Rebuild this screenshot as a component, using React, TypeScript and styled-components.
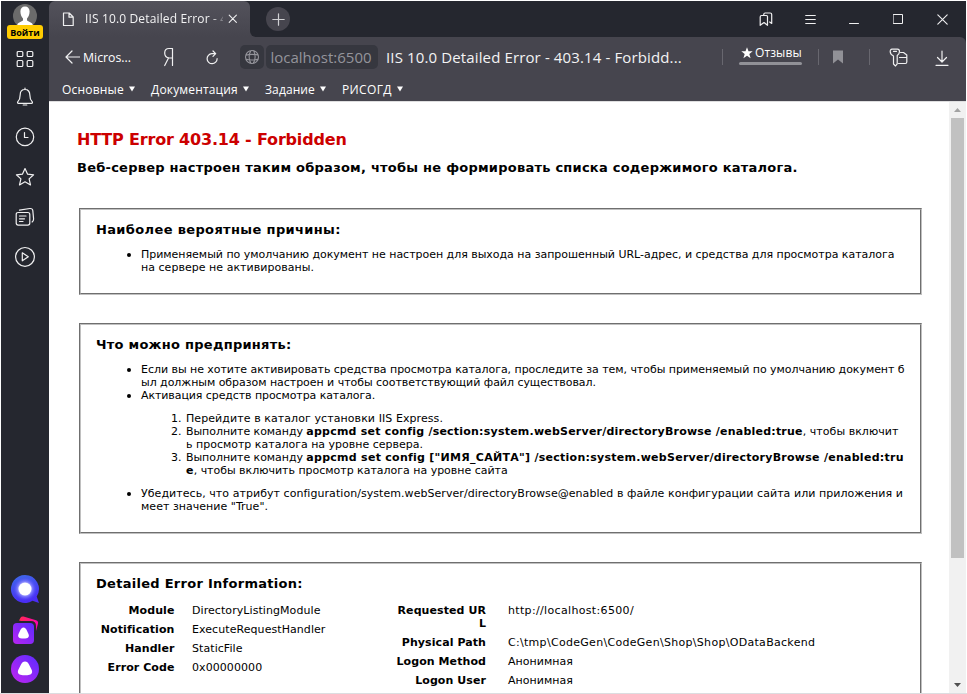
import React from 'react';
import styled, { createGlobalStyle } from 'styled-components';

const Global = createGlobalStyle`
  * { box-sizing: border-box; }
  body { margin: 0; background: #fff; overflow: hidden; }
  svg { display: block; flex: none; }
`;

const UI = "'Open Sans', 'Noto Sans', sans-serif";
const PAGE = "Verdana, 'DejaVu Sans', sans-serif";

const Window = styled.div`
  width: 967px;
  height: 694px;
  padding: 1px 1px 0 1px;
  border-bottom: 1px solid #dcdde0;
  display: flex;
  background: #fff;
  overflow: hidden;
`;

const Sidebar = styled.nav`
  width: 48px;
  flex: none;
  background: #25272f;
  display: flex;
  flex-direction: column;
  align-items: center;
`;

const Profile = styled.div`
  height: 39px;
  padding-top: 3px;
  display: flex;
  flex-direction: column;
  align-items: center;
`;

const SignIn = styled.div`
  width: 36px;
  height: 14px;
  margin-top: -3px;
  border-radius: 3px;
  background: #ffcc00;
  color: #000;
  font: bold 9px/15px ${UI};
  text-align: center;
  z-index: 1;
`;

const SideItem = styled.div<{ $h?: number }>`
  height: ${p => p.$h ?? 40}px;
  width: 48px;
  display: flex;
  align-items: center;
  justify-content: center;
`;

const Spacer = styled.div`flex: 1;`;

const Main = styled.div`
  flex: 1;
  min-width: 0;
  display: flex;
  flex-direction: column;
  background: #25272f;
`;

const TabStrip = styled.header`
  height: 36px;
  flex: none;
  display: flex;
  align-items: center;
  background: #25272f;
  color: #fff;
`;

const TabSlot = styled.div`
  width: 212px;
  height: 36px;
  flex: none;
  display: flex;
  background: #46454e;
`;

const TabBack = styled.div`
  width: 201px;
  height: 36px;
  flex: none;
  background: #25272f;
`;

const Tab = styled.div`
  height: 36px;
  display: flex;
  align-items: center;
  padding-left: 13px;
  border-radius: 6px 6px 0 0;
  background: linear-gradient(#53525b, #46454e);
`;

const TabEdge = styled.div`
  flex: 1;
  height: 36px;
  border-bottom-left-radius: 6px;
  background: #25272f;
`;

const TabTitle = styled.div`
  width: 138px;
  margin-left: 10px;
  overflow: hidden;
  white-space: nowrap;
  font: 12px/18px ${UI};
  letter-spacing: 0.14px;
  color: #f2f2f3;
  mask-image: linear-gradient(to right, #000 126px, transparent 142px);
`;

const TabClose = styled.div`margin-left: 5px;`;

const NewTab = styled.div`
  width: 24px;
  height: 24px;
  margin-left: 5px;
  border-radius: 50%;
  background: #46454e;
  display: grid;
  place-items: center;
`;

const WindowButtons = styled.div`
  margin-left: auto;
  display: grid;
  grid-template-columns: repeat(5, 44px);
  justify-items: center;
  align-items: center;
  height: 36px;
  padding-right: 2px;
`;

const Chrome = styled.div`
  height: 64px;
  flex: none;
  background: #46454e;
  border-radius: 0 6px 0 0;
  color: #fff;
`;

const Toolbar = styled.div`
  height: 40px;
  display: flex;
  align-items: center;
`;

const Back = styled.div`
  width: 92px;
  margin-left: 16px;
  display: flex;
  align-items: center;
  gap: 3px;
  font: 12.3px/20px ${UI};
`;

const BackLabel = styled.span`padding-top: 2px;`;

const Ya = styled.div`
  width: 44px;
  margin-left: -2px;
`;

const Chip = styled.div<{ $w: number }>`
  width: ${p => p.$w}px;
  height: 24px;
  border-radius: 5px;
  background: #36373f;
  color: #94949b;
  display: flex;
  align-items: center;
  justify-content: center;
  font: 15px/24px ${UI};
  margin-right: 2px;
`;

const Host = styled.span`padding-right: 2px;`;

const PageTitle = styled.div`
  margin-left: 6px;
  width: 336px;
  white-space: nowrap;
  font: 15px/24px ${UI};
  letter-spacing: 0.13px;
  color: #f3f3f4;
`;

const Divider = styled.div`
  width: 1px;
  height: 16px;
  background: #68676f;
`;

const Reviews = styled.div`
  width: 63px;
  height: 26px;
  margin: 0 16px;
  display: flex;
  flex-direction: column;
  font: 12px/17px ${UI};
`;

const ReviewsLabel = styled.div`
  display: flex;
  align-items: center;
  gap: 2px;
  padding-left: 2px;
  height: 17px;
  letter-spacing: 0.1px;
`;

const Meter = styled.div`
  height: 3px;
  margin-top: 1px;
  border-radius: 2px;
  background: #919197;
`;

const Slot = styled.div<{ $w: number; $top?: number }>`
  width: ${p => p.$w}px;
  padding-top: ${p => p.$top ?? 0}px;
  display: flex;
  justify-content: center;
`;

const Bookmarks = styled.div`
  height: 24px;
  padding: 2px 0 0 13px;
  display: flex;
  align-items: center;
  font: 12px/18px ${UI};
`;

const Folder = styled.div<{ $w: number; $ls: number }>`
  width: ${p => p.$w}px;
  display: flex;
  align-items: center;
  gap: 5px;
  letter-spacing: ${p => p.$ls}px;
  svg { margin-bottom: 2px; }
`;

const Viewport = styled.div`
  flex: 1;
  min-height: 0;
  display: flex;
  background: #fff;
  border-top: 1px solid #dededf;
`;

const Document = styled.main`
  flex: 1;
  min-width: 0;
  height: 591px;
  overflow: hidden;
  padding: 28px 27px 0 28px;
  font: 11px/13px ${PAGE};
  color: #000;
`;

const ErrorTitle = styled.h2`
  margin: 0;
  font: bold 16px/20px ${PAGE};
  letter-spacing: -0.18px;
  color: #cc0000;
  white-space: nowrap;
`;

const ErrorText = styled.h3`
  margin: 9px 0 31px;
  font: bold 13px/18px ${PAGE};
  letter-spacing: 0.24px;
  white-space: nowrap;
`;

const Panel = styled.section<{ $h: number }>`
  width: 843px;
  height: ${p => p.$h}px;
  margin: 0 0 28px 2px;
  border: 1px solid;
  border-color: #6f6f6f #c0c0c0 #c0c0c0 #6f6f6f;
`;

const PanelInner = styled.div`
  height: 100%;
  border: 1px solid;
  border-color: #c0c0c0 #6f6f6f #6f6f6f #c0c0c0;
  padding: 11px 0 0 15px;
`;

const PanelTitle = styled.h4<{ $ls: number }>`
  margin: 0;
  font: bold 13px/18px ${PAGE};
  letter-spacing: ${p => p.$ls}px;
  white-space: nowrap;
`;

const Bullets = styled.ul`
  margin: 9px 0 0;
  padding: 0 0 0 45px;
  list-style: none;
`;

const Steps = styled.ol`
  margin: 10px 0;
  padding: 0 0 0 45px;
  list-style: none;
  counter-reset: step;
`;

const Bullet = styled.li`
  display: block;
  &::before {
    content: '';
    float: left;
    width: 4px;
    height: 4px;
    margin: 5px 0 0 -14px;
    border-radius: 50%;
    background: #000;
  }
`;

const Step = styled.li`
  counter-increment: step;
  &::before {
    content: counter(step) '.';
    float: left;
    width: 15px;
    margin-left: -15px;
  }
`;

const Line = styled.div<{ $ls?: number }>`
  height: 13px;
  white-space: pre;
  letter-spacing: ${p => p.$ls ?? 0}px;
`;

const Run = styled.span<{ $ls: number }>`letter-spacing: ${p => p.$ls}px;`;
const Command = styled.b<{ $ls: number }>`letter-spacing: ${p => p.$ls}px;`;

const Details = styled.div`
  display: flex;
  align-items: flex-start;
  margin-top: 11px;
`;

const Table = styled.dl<{ $label: number; $width: number; $gap: number }>`
  margin: 0;
  width: ${p => p.$width}px;
  display: grid;
  grid-template-columns: ${p => p.$label}px 1fr;
  column-gap: ${p => p.$gap}px;
  row-gap: 6px;
`;

const Term = styled.dt<{ $ls?: number }>`
  font-weight: bold;
  text-align: right;
  letter-spacing: ${p => p.$ls ?? 0.08}px;
  white-space: pre;
`;

const Value = styled.dd<{ $ls?: number }>`
  margin: 0;
  white-space: nowrap;
  letter-spacing: ${p => p.$ls ?? 0.07}px;
`;

const Scrollbar = styled.div`
  width: 17px;
  background: #f1f1f1;
  display: flex;
  flex-direction: column;
  align-items: center;
`;

const ScrollArrow = styled.div`
  width: 17px;
  height: 16px;
  display: grid;
  place-items: center;
`;

const Thumb = styled.div`
  width: 13px;
  height: 440px;
  background: #c1c1c1;
`;

const Stroke = ({ w, h, d, s = 1.2, c = '#f0f0f1' }: { w: number; h: number; d: string; s?: number; c?: string }) => (
  <svg width={w} height={h} viewBox={`0 0 ${w} ${h}`} fill="none" stroke={c} strokeWidth={s} strokeLinecap="round" strokeLinejoin="round">
    <path d={d} />
  </svg>
);

const Avatar = () => (
  <svg width="24" height="24" viewBox="0 0 24 24">
    <defs><clipPath id="av"><circle cx="12" cy="12" r="12" /></clipPath></defs>
    <g clipPath="url(#av)">
      <rect width="24" height="24" fill="#6b6b6b" />
      <path d="M12 2.5c3 0 4.600 2 4.600 5 0 3.200-1.300 5.700-2.600 7v2l4.500 2.500c1 .6 1.500 2 1.500 5H4c0-3 .5-4.400 1.500-5L10 16.500v-2C8.700 13.200 7.400 10.700 7.400 7.500c0-3 1.600-5 4.600-5z" fill="#fff" />
    </g>
  </svg>
);

const Caret = () => (
  <svg width="6" height="6" viewBox="0 0 6 6"><path d="M0 .5h6L3 5.500z" fill="#fff" /></svg>
);

const Globe = () => (
  <Stroke w={16} h={16} s={1.1} c="#94949b" d="M8 1.500a6.500 6.500 0 1 0 0 13a6.500 6.500 0 1 0 0-13M1.800 6.300C5 5 11 5 14.300 6.300M1.800 10c3 1.400 9.400 1.400 12.500 0M7 1.600C4.500 5 4.500 11 7 14.400M9.500 1.700c2.200 3.300 2.200 9.300-.2 12.600" />
);

const Messenger = () => (
  <svg width="30" height="30" viewBox="0 0 30 30">
    <defs>
      <linearGradient id="ms" x1="0" y1="0" x2="0.3" y2="1"><stop offset="0" stopColor="#3d6be8" /><stop offset="1" stopColor="#4a2df5" /></linearGradient>
      <radialGradient id="glow"><stop offset=".45" stopColor="#fff" /><stop offset=".6" stopColor="#8f8cff" stopOpacity=".85" /><stop offset="1" stopColor="#4b45fa" stopOpacity="0" /></radialGradient>
    </defs>
    <path d="M15 1a14 14 0 1 0 7.500 25.800L29 29l-2.300-6.500A14 14 0 0 0 15 1z" fill="url(#ms)" />
    <circle cx="15" cy="15" r="12" fill="url(#glow)" />
    <circle cx="15" cy="15" r="6.300" fill="#fff" />
  </svg>
);

const AlisaCards = () => (
  <svg width="28" height="30" viewBox="0 0 28 30">
    <defs>
      <linearGradient id="ac" x1="1" y1="0" x2="0" y2="1"><stop offset="0" stopColor="#5b2bff" /><stop offset="1" stopColor="#b825f0" /></linearGradient>
      <linearGradient id="pk" x1="0" x2="1"><stop offset="0" stopColor="#ff2b50" /><stop offset="1" stopColor="#ff00b4" /></linearGradient>
    </defs>
    <path d="M8 5.500L9.500 2.800Q10.500 1 12.500 1.500L25 5.200Q27.500 6 27 8.500L25 16V11Q25 6 20 6H10z" fill="url(#pk)" />
    <rect x="2" y="8" width="21" height="21" rx="4" fill="url(#ac)" />
    <path d="M12.500 12.500c1.500 0 2.300 1 3 2.300l2 4.200c1 2.300 0 3.800-1.800 4.200q-3.200.7-6.400 0C7.500 22.800 6.500 21.300 7.500 19l2-4.200c.7-1.300 1.500-2.300 3-2.300z" fill="#fff" />
  </svg>
);

const Alisa = () => (
  <svg width="28" height="28" viewBox="0 0 28 28">
    <defs><linearGradient id="al" x1="1" y1="0" x2="0" y2="1"><stop offset=".15" stopColor="#6a2bff" /><stop offset=".9" stopColor="#b825f0" /></linearGradient></defs>
    <circle cx="14" cy="14" r="14" fill="url(#al)" />
    <path d="M14 6.500c2 0 3 1.300 4 3l2.500 5c1.500 3.200 0 4.700-2 5.200q-4.500 1-9 0c-2-.5-3.500-2-2-5.200l2.500-5c1-1.700 2-3 4-3z" fill="#fff" />
  </svg>
);

export default function App() {
  return (
    <>
      <Global />
      <Window>
        <Sidebar>
          <Profile><Avatar /><SignIn>Войти</SignIn></Profile>
          <SideItem $h={38}>
            <Stroke w={18} h={18} d="M2.200 1.500h3.600q1 0 1 1v3q0 1-1 1H2.200q-1 0-1-1v-3q0-1 1-1zM12.200 1.500h3.600q1 0 1 1v3q0 1-1 1h-3.600q-1 0-1-1v-3q0-1 1-1zM2.200 10.500h3.600q1 0 1 1v4q0 1-1 1H2.200q-1 0-1-1v-4q0-1 1-1zM12.200 10.500h3.600q1 0 1 1v4q0 1-1 1h-3.600q-1 0-1-1v-4q0-1 1-1z" />
          </SideItem>
          <SideItem $h={38}>
            <Stroke w={18} h={20} d="M9 1.200v1.300M9 2.500c-3 0-4.800 2.300-4.800 5.200 0 4.300-1 5.600-2.300 7-.7.800-.4 1.600.6 1.600h13c1 0 1.300-.8.600-1.600-1.300-1.400-2.300-2.700-2.300-7C13.800 4.800 12 2.500 9 2.500zM7.200 18h3.600" />
          </SideItem>
          <SideItem $h={41}>
            <Stroke w={20} h={20} d="M10 1.200a8.700 8.700 0 1 0 0 17.400a8.700 8.700 0 1 0 0-17.400M9.500 5.500v5H13" />
          </SideItem>
          <SideItem>
            <Stroke w={20} h={20} d="M10 1.500l2.600 5.700 6 .6-4.500 4.100 1.400 6L10 14.800 4.500 17.900l1.400-6L1.400 7.800l6-.6z" />
          </SideItem>
          <SideItem>
            <Stroke w={20} h={20} d="M3.200 5.500h9.600q2 0 2 2v8.600q0 2-2 2H3.200q-2 0-2-2V7.500q0-2 2-2zM4.500 9h6.500M4.500 11.800h5M4.500 14.500h3.500M4.500 3.200L14.800 1.500q2.800-.2 3 2L18.600 12q0 2-1.500 3" />
          </SideItem>
          <SideItem>
            <Stroke w={22} h={22} d="M11 1.500a9.400 9.400 0 1 0 0 18.800a9.400 9.400 0 1 0 0-18.800M8.300 6.800v8l6-4z" />
          </SideItem>
          <Spacer />
          <SideItem $h={40}><Messenger /></SideItem>
          <SideItem $h={41}><AlisaCards /></SideItem>
          <SideItem $h={37}><Alisa /></SideItem>
          <SideItem $h={6} />
        </Sidebar>
        <Main>
          <TabStrip>
            <TabSlot>
              <TabBack>
                <Tab>
                  <Stroke w={13} h={15} d="M1.500 1h5.700l4 4v8.500H1.500zM7 1.200v4h4" />
                  <TabTitle>IIS 10.0 Detailed Error - 403.14</TabTitle>
                  <TabClose><Stroke w={10} h={10} d="M1.200 1.200l7.200 7.200M8.400 1.200L1.200 8.400" s={1.1} /></TabClose>
                </Tab>
              </TabBack>
              <TabEdge />
            </TabSlot>
            <NewTab><Stroke w={13} h={13} d="M6.500.8v11.400M.8 6.500h11.400" s={1.2} c="#d0d0d3" /></NewTab>
            <WindowButtons>
              <Stroke w={14} h={14} s={1.2} d="M2.500 3.500h5q1 0 1 1v8.800L5 10.500l-3.800 2.800V5Q1.200 3.500 2.500 3.500zM4.700 3q0-2 1.500-2h5q1.500 0 1.500 1.500v9l-2-1.500" />
              <Stroke w={11} h={11} s={1.1} d="M.7 1.500h9.600M.7 5.500h9.600M.7 9.500h9.600" />
              <Stroke w={10} h={10} s={1} d="M.5 9.500h9" />
              <Stroke w={10} h={10} s={1} d="M.5.5h9v9h-9z" />
              <Stroke w={11} h={11} s={1.1} d="M.8.8l9.400 9.400M10.200.8L.8 10.200" />
            </WindowButtons>
          </TabStrip>
          <Chrome>
            <Toolbar>
              <Back>
                <Stroke w={15} h={14} s={1.2} d="M7 1L1 7l6 6M1 7h13.500" />
                <BackLabel>Micros...</BackLabel>
              </Back>
              <Ya><Stroke w={26} h={20} s={1.2} d="M17.500 18.500v-17h-3.500Q9.700 1.500 9.700 6t4.500 5h3.300M13.500 11L9.700 18.500" /></Ya>
              <Slot $w={25} $top={1}><Stroke w={14} h={16} s={1.2} d="M10.500 3.700H6.800a5 5 0 1 0 5.300 5M8 1l2.700 2.700L8 6.400" /></Slot>
              <Slot $w={16} />
              <Chip $w={24}><Globe /></Chip>
              <Chip $w={112}><Host>localhost:6500</Host></Chip>
              <PageTitle>IIS 10.0 Detailed Error - 403.14 - Forbidd...</PageTitle>
              <Divider />
              <Reviews>
                <ReviewsLabel>
                  <svg width="12" height="12" viewBox="0 0 12 12"><path d="M6 .3l1.500 4h4.200L8.300 6.900l1.300 4.300L6 8.700l-3.600 2.500 1.300-4.300L.3 4.300h4.200z" fill="#fff" /></svg>
                  Отзывы
                </ReviewsLabel>
                <Meter />
              </Reviews>
              <Divider />
              <Slot $w={38}><svg width="10" height="14" viewBox="0 0 10 14"><path d="M0 .5h10v13L5 9.500l-5 4z" fill="#919197" /></svg></Slot>
              <Slot $w={12} />
              <Divider />
              <Slot $w={57}>
                <Stroke w={20} h={19} s={1.2} d="M3 1.200h5.500q2 0 2 2.300 0 2.500-2.300 4v8.300L6.500 18 4.500 16V8Q1.200 6.500 1.200 3.500 1.200 1.200 3 1.200zM4.500 3.300h3M11.500 4.500h3l3.300 2.500v7q0 1.500-1.500 1.500H9.500M10.500 9.500h7" />
              </Slot>
              <Slot $w={30} $top={1}><Stroke w={14} h={18} s={1.2} d="M7 2v11M2.500 8.500L7 13l4.500-4.500M1 16.300h12" /></Slot>
            </Toolbar>
            <Bookmarks>
              <Folder $w={89} $ls={0.2}>Основные <Caret /></Folder>
              <Folder $w={114} $ls={0.17}>Документация <Caret /></Folder>
              <Folder $w={77} $ls={0.11}>Задание <Caret /></Folder>
              <Folder $w={70} $ls={0.38}>РИСОГД <Caret /></Folder>
            </Bookmarks>
          </Chrome>
          <Viewport>
            <Document>
              <ErrorTitle>HTTP Error 403.14 - Forbidden</ErrorTitle>
              <ErrorText>Веб-сервер настроен таким образом, чтобы не формировать списка содержимого каталога.</ErrorText>
              <Panel $h={87}>
                <PanelInner>
                  <PanelTitle $ls={0.36}>Наиболее вероятные причины:</PanelTitle>
                  <Bullets>
                    <Bullet>
                      <Line $ls={-0.024}>Применяемый по умолчанию документ не настроен для выхода на запрошенный URL-адрес, и средства для просмотра каталога</Line>
                      <Line $ls={0.034}>на сервере не активированы.</Line>
                    </Bullet>
                  </Bullets>
                </PanelInner>
              </Panel>
              <Panel $h={211}>
                <PanelInner>
                  <PanelTitle $ls={0.26}>Что можно предпринять:</PanelTitle>
                  <Bullets>
                    <Bullet>
                      <Line $ls={-0.044}>Если вы не хотите активировать средства просмотра каталога, проследите за тем, чтобы применяемый по умолчанию документ б</Line>
                      <Line $ls={-0.043}>ыл должным образом настроен и чтобы соответствующий файл существовал.</Line>
                    </Bullet>
                    <Bullet>
                      <Line $ls={-0.09}>Активация средств просмотра каталога.</Line>
                      <Steps>
                        <Step><Line $ls={0.078}>Перейдите в каталог установки IIS Express.</Line></Step>
                        <Step>
                          <Line><Run $ls={-0.06}>Выполните команду </Run><Command $ls={0.219}>appcmd set config /section:system.webServer/directoryBrowse /enabled:true</Command><Run $ls={0.04}>, чтобы включит</Run></Line>
                          <Line>ь просмотр каталога на уровне сервера.</Line>
                        </Step>
                        <Step>
                          <Line><Run $ls={-0.06}>Выполните команду </Run><Command $ls={0.27}>appcmd set config ["ИМЯ_САЙТА"] /section:system.webServer/directoryBrowse /enabled:tru</Command></Line>
                          <Line><Command $ls={0.2}>e</Command><Run $ls={-0.018}>, чтобы включить просмотр каталога на уровне сайта</Run></Line>
                        </Step>
                      </Steps>
                    </Bullet>
                    <Bullet>
                      <Line $ls={0.053}>Убедитесь, что атрибут configuration/system.webServer/directoryBrowse@enabled в файле конфигурации сайта или приложения и</Line>
                      <Line $ls={0.03}>меет значение "True".</Line>
                    </Bullet>
                  </Bullets>
                </PanelInner>
              </Panel>
              <Panel $h={200}>
                <PanelInner>
                  <PanelTitle $ls={0.28}>Detailed Error Information:</PanelTitle>
                  <Details>
                    <Table $label={78.5} $width={300} $gap={17.5}>
                      <Term>Module</Term><Value>DirectoryListingModule</Value>
                      <Term>Notification</Term><Value>ExecuteRequestHandler</Value>
                      <Term>Handler</Term><Value>StaticFile</Value>
                      <Term>Error Code</Term><Value>0x00000000</Value>
                    </Table>
                    <Table $label={90} $width={500} $gap={22}>
                      <Term>{'Requested UR\nL'}</Term><Value $ls={0.34}>http://localhost:6500/</Value>
                      <Term>Physical Path</Term><Value $ls={0.3}>C:\tmp\CodeGen\CodeGen\Shop\Shop\ODataBackend</Value>
                      <Term>Logon Method</Term><Value $ls={0.04}>Анонимная</Value>
                      <Term>Logon User</Term><Value $ls={0.04}>Анонимная</Value>
                    </Table>
                  </Details>
                </PanelInner>
              </Panel>
            </Document>
            <Scrollbar>
              <ScrollArrow><svg width="7" height="4" viewBox="0 0 7 4"><path d="M0 4L3.500 0 7 4z" fill="#a3a3a3" /></svg></ScrollArrow>
              <Thumb />
              <Spacer />
              <ScrollArrow><svg width="7" height="4" viewBox="0 0 7 4"><path d="M0 0h7L3.500 4z" fill="#505050" /></svg></ScrollArrow>
            </Scrollbar>
          </Viewport>
        </Main>
      </Window>
    </>
  );
}
